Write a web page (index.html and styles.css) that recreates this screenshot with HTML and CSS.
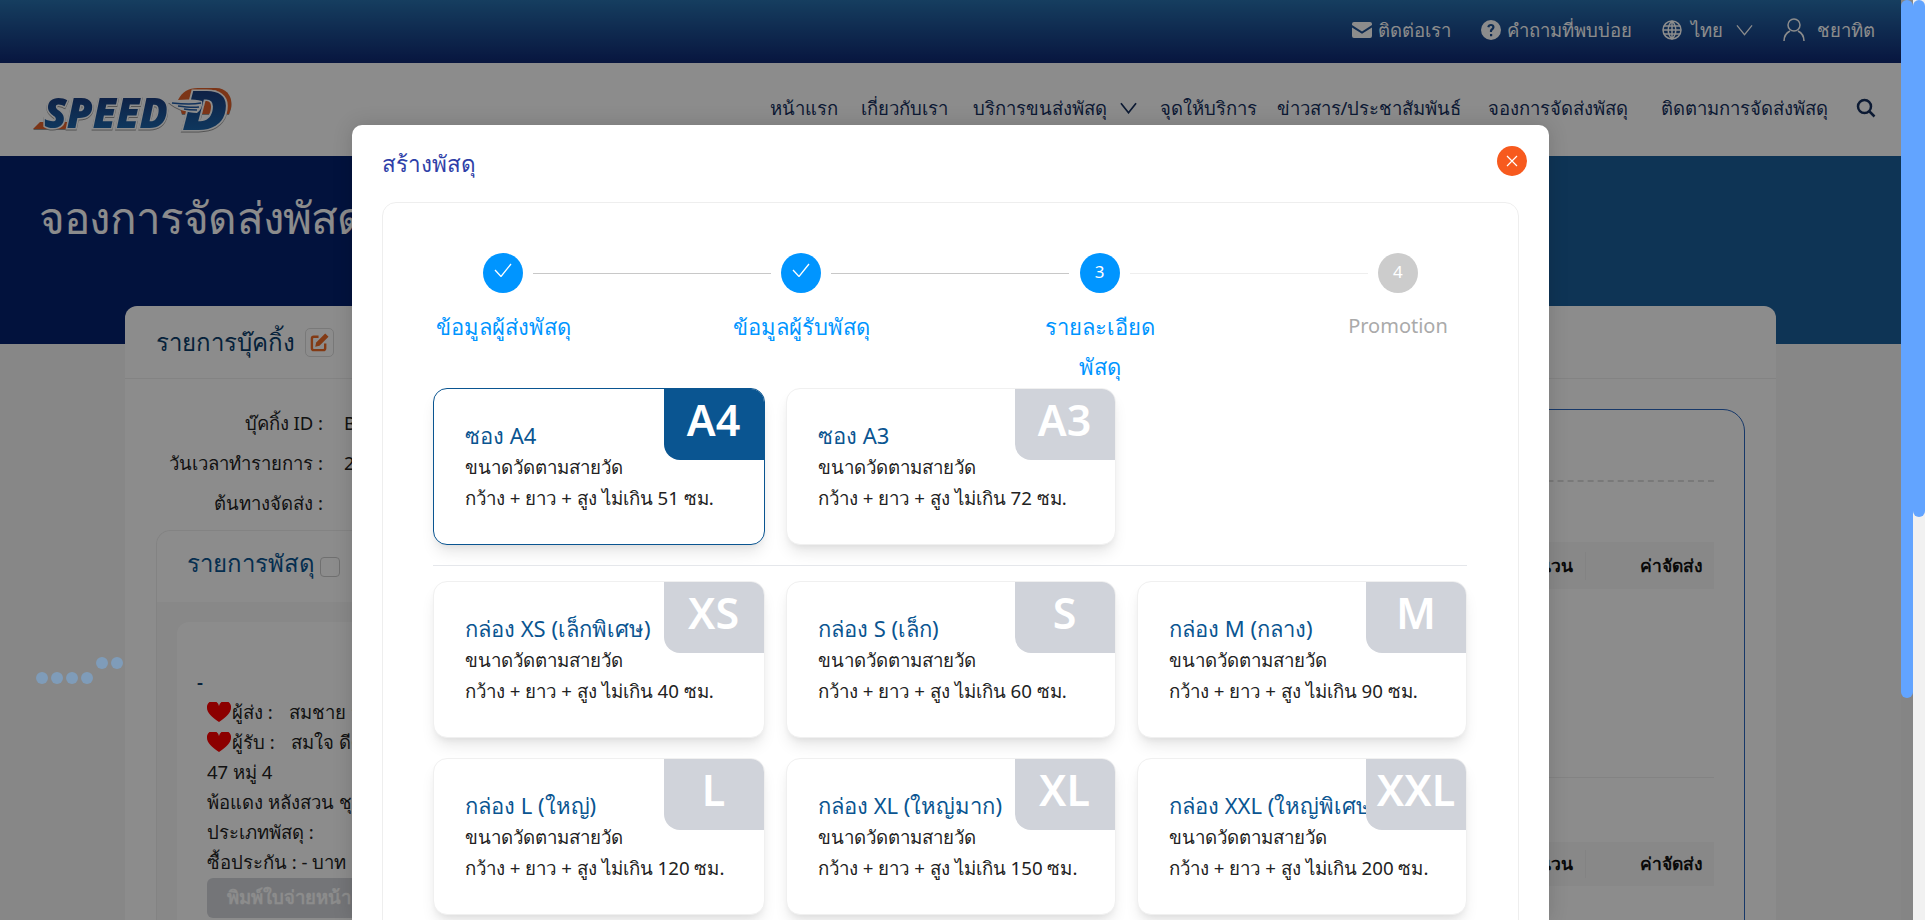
FILE: index.html
```html
<!DOCTYPE html>
<html lang="th">
<head>
  <meta charset="UTF-8">
  <title>สร้างพัสดุ</title>
  <link rel="stylesheet" href="styles.css">
</head>
<body>
  <div class="page">
    <header class="topbar">
      <a class="top-link"><svg class="ic-mail" viewBox="0 0 20 16"><path d="M2 0h16a2 2 0 0 1 2 2v1l-10 6.500L0 3V2a2 2 0 0 1 2-2zM0 5.400l10 6.400 10-6.400V14a2 2 0 0 1-2 2H2a2 2 0 0 1-2-2z"/></svg>ติดต่อเรา</a>
      <a class="top-link"><svg class="ic-help" viewBox="0 0 20 20"><path fill-rule="evenodd" d="M10 0a10 10 0 1 1 0 20 10 10 0 0 1 0-20zM9 14v2.200h2.200V14zM10 4C7.900 4 6.500 5.200 6.300 7.100l2.100.3c.1-1 .7-1.500 1.500-1.500s1.400.5 1.400 1.200c0 .6-.3 1-1 1.500-1 .8-1.400 1.400-1.400 2.600v.8h2.100v-.5c0-.7.200-1 1-1.600 1-.8 1.500-1.600 1.500-2.800C13.500 5.300 12 4 10 4z"/></svg>คำถามที่พบบ่อย</a>
      <a class="top-link"><svg class="ic-globe" viewBox="0 0 20 20"><circle cx="10" cy="10" r="9"/><path d="M1 10h18M2 6h16M2 14h16M10 1v18M10 1c-5 5-5 13 0 18M10 1c5 5 5 13 0 18"/></svg>ไทย<svg class="ic-chev" viewBox="0 0 18 12"><path d="M1 1l8 10 8-10"/></svg></a>
      <a class="top-link user"><svg class="ic-user" viewBox="0 0 22 24"><circle cx="11" cy="7" r="6"/><path d="M1 23c0-6 4-9 6-10M21 23c0-6-4-9-6-10"/></svg>ชยาทิต</a>
    </header>

    <nav class="mainnav">
      <svg class="logo" viewBox="0 0 200 44">
        <defs>
          <linearGradient id="logoBlue" x1="0" y1="0" x2="0" y2="1">
            <stop offset="0" stop-color="#1b2a6b"/>
            <stop offset="1" stop-color="#1c75bc"/>
          </linearGradient>
        </defs>
        <path class="logo-red" d="M146 12C150 4 156 0 166 0h18c11 0 17 9 15 20l-2 6h-47z"/>
        <text class="logo-small" x="162" y="9">สปีด-ดี</text>
        <path class="logo-red" d="M1 41l7-7h32l-5 7z"/>
        <text class="logo-word" x="12" y="40" textLength="124" lengthAdjust="spacingAndGlyphs">SPEED</text>
        <text class="logo-d" x="150" y="42" textLength="46" lengthAdjust="spacingAndGlyphs">D</text>
        <path class="logo-wing" d="M136 14c12-3 24-3 34-1 1 4-1 9-5 12-10 0-21-4-29-11z"/>
        <path class="logo-wing-line" d="M140 15c9 1 19 2 29 0M146 18c7 1 14 2 21 1M152 21c5 1 9 1 13 1"/>
      </svg>
      <ul class="menu">
        <li>หน้าแรก</li>
        <li>เกี่ยวกับเรา</li>
        <li>บริการขนส่งพัสดุ<svg class="ic-chev dark" viewBox="0 0 18 12"><path d="M1 1l8 10 8-10"/></svg></li>
        <li>จุดให้บริการ</li>
        <li>ข่าวสาร/ประชาสัมพันธ์</li>
        <li>จองการจัดส่งพัสดุ</li>
        <li>ติดตามการจัดส่งพัสดุ</li>
        <li><svg class="ic-search" viewBox="0 0 20 20"><circle cx="8.500" cy="8.500" r="6.500"/><path d="M13.500 13.500l5 5"/></svg></li>
      </ul>
    </nav>

    <section class="hero"><h1>จองการจัดส่งพัสดุ</h1></section>

    <main class="booking">
      <div class="booking-head">รายการบุ๊คกิ้ง
        <span class="edit-btn"><svg viewBox="0 0 20 20"><path class="edit-box" d="M9 4H4a2 2 0 0 0-2 2v10a2 2 0 0 0 2 2h10a2 2 0 0 0 2-2v-5"/><path class="edit-pen" d="M16 0.500l3.500 3.500L10 13.500l-4.500 1 1-4.500z"/></svg></span>
      </div>
      <div class="booking-body">
        <div class="booking-left">
          <dl class="meta">
            <dt>บุ๊คกิ้ง ID :</dt><dd>BK2024</dd>
            <dt>วันเวลาทำรายการ :</dt><dd>2024</dd>
            <dt>ต้นทางจัดส่ง :</dt><dd></dd>
          </dl>
          <div class="parcels">
            <div class="parcels-head">รายการพัสดุ<span class="check"></span></div>
            <div class="parcels-body">
              <div class="parcel">
                <p class="dash">-</p>
                <p class="who"><svg class="heart" viewBox="0 0 24 20"><path d="M12 20C5 15 0 11 0 6a6 6 0 0 1 12-2 6 6 0 0 1 12 2c0 5-5 9-12 14z"/></svg>ผู้ส่ง :<span class="who-name">สมชาย สมชาย</span></p>
                <p class="who"><svg class="heart" viewBox="0 0 24 20"><path d="M12 20C5 15 0 11 0 6a6 6 0 0 1 12-2 6 6 0 0 1 12 2c0 5-5 9-12 14z"/></svg>ผู้รับ :<span class="who-name">สมใจ ดีดี</span></p>
                <p>47 หมู่ 4</p>
                <p>พ้อแดง หลังสวน ชุมพร</p>
                <p>ประเภทพัสดุ :</p>
                <p>ซื้อประกัน : - บาท</p>
                <span class="print-btn">พิมพ์ใบจ่ายหน้า</span>
              </div>
            </div>
          </div>
        </div>
        <div class="summary">
          <div class="summary-top"></div>
          <div class="fee-head"><span class="qty">จำนวน</span><span>ค่าจัดส่ง</span></div>
          <div class="fee-row"></div>
          <div class="fee-head"><span class="qty">จำนวน</span><span>ค่าจัดส่ง</span></div>
        </div>
      </div>
    </main>
    <div class="page-dim"></div>
    <div class="loader"><i></i><i></i><i></i><i></i><i class="up"></i><i class="up"></i></div>
  </div>

  <div class="modal-wrap">
    <section class="modal">
      <div class="modal-head">
        <h3>สร้างพัสดุ</h3>
        <button class="close"><svg viewBox="0 0 12 12"><path d="M1 1l10 10M11 1L1 11"/></svg></button>
      </div>
      <div class="modal-card">
        <ol class="steps">
          <li class="step done"><span class="dot"><svg viewBox="0 0 18 14"><path d="M1 7l6 6.500L17 1"/></svg></span>ข้อมูลผู้ส่งพัสดุ</li>
          <li class="step done"><span class="dot"><svg viewBox="0 0 18 14"><path d="M1 7l6 6.500L17 1"/></svg></span>ข้อมูลผู้รับพัสดุ</li>
          <li class="step now"><span class="dot">3</span>รายละเอียดพัสดุ</li>
          <li class="step later"><span class="dot">4</span>Promotion</li>
        </ol>
        <div class="sizes">
          <div class="size picked"><b class="tag">A4</b><h4>ซอง A4</h4><p>ขนาดวัดตามสายวัด</p><p>กว้าง + ยาว + สูง ไม่เกิน 51 ซม.</p></div>
          <div class="size"><b class="tag">A3</b><h4>ซอง A3</h4><p>ขนาดวัดตามสายวัด</p><p>กว้าง + ยาว + สูง ไม่เกิน 72 ซม.</p></div>
        </div>
        <hr class="split">
        <div class="sizes">
          <div class="size"><b class="tag">XS</b><h4>กล่อง XS (เล็กพิเศษ)</h4><p>ขนาดวัดตามสายวัด</p><p>กว้าง + ยาว + สูง ไม่เกิน 40 ซม.</p></div>
          <div class="size"><b class="tag">S</b><h4>กล่อง S (เล็ก)</h4><p>ขนาดวัดตามสายวัด</p><p>กว้าง + ยาว + สูง ไม่เกิน 60 ซม.</p></div>
          <div class="size"><b class="tag">M</b><h4>กล่อง M (กลาง)</h4><p>ขนาดวัดตามสายวัด</p><p>กว้าง + ยาว + สูง ไม่เกิน 90 ซม.</p></div>
          <div class="size"><b class="tag">L</b><h4>กล่อง L (ใหญ่)</h4><p>ขนาดวัดตามสายวัด</p><p>กว้าง + ยาว + สูง ไม่เกิน 120 ซม.</p></div>
          <div class="size"><b class="tag">XL</b><h4>กล่อง XL (ใหญ่มาก)</h4><p>ขนาดวัดตามสายวัด</p><p>กว้าง + ยาว + สูง ไม่เกิน 150 ซม.</p></div>
          <div class="size"><b class="tag">XXL</b><h4>กล่อง XXL (ใหญ่พิเศษ)</h4><p>ขนาดวัดตามสายวัด</p><p>กว้าง + ยาว + สูง ไม่เกิน 200 ซม.</p></div>
        </div>
      </div>
    </section>
  </div>

  <div class="bars"><span class="bar page-bar"><i></i></span><span class="bar modal-bar"><i></i></span></div>
</body>
</html>
```

FILE: styles.css
```css
* {
  box-sizing: border-box;
}

html, body {
  height: 100%;
  margin: 0;
  overflow: hidden;
}

body {
  font-family: "Noto Sans", "Open Sans", "DejaVu Sans", sans-serif;
  font-size: 18.500px;
  color: #222;
  background: #f6f6f6;
}

p, h1, h3, h4, ul, ol, dl, dd {
  margin: 0;
  padding: 0;
  list-style: none;
}

.page {
  position: relative;
  height: 920px;
  width: 1901px;
  overflow: hidden;
}

/* page behind the modal */
.topbar {
  height: 63px;
  display: flex;
  justify-content: flex-end;
  align-items: center;
  gap: 30px;
  padding: 0 26px 3px 0;
  background: linear-gradient(#2871ae, #0f2873);
  color: #fff;
}

.top-link {
  display: flex;
  align-items: center;
  gap: 6px;
}

.ic-mail, .ic-help {
  width: 20px;
  height: 20px;
  fill: #fff;
}

.ic-globe {
  width: 20px;
  height: 20px;
  fill: none;
  stroke: #fff;
  stroke-width: 1.500;
  margin-right: 3px;
}

.ic-chev {
  width: 17px;
  height: 12px;
  fill: none;
  stroke: #fff;
  stroke-width: 1.300;
  margin-left: 7px;
}

.ic-chev.dark {
  flex: none;
  stroke: #16305e;
  stroke-width: 1.800;
  margin-left: 13px;
}

.ic-user {
  width: 22px;
  height: 24px;
  fill: none;
  stroke: #fff;
  stroke-width: 1.500;
  margin-right: 6px;
}

.mainnav {
  height: 93px;
  display: flex;
  justify-content: space-between;
  background: #fff;
  padding: 25px 25px 0 32px;
}

.logo {
  width: 200px;
  height: 44px;
  overflow: visible;
  filter: drop-shadow(0 1px 0 #999);
}

.logo-red {
  fill: #e2622a;
}

.logo-small {
  font-size: 8px;
  fill: #fff;
}

.logo-word, .logo-d {
  font-family: "Open Sans", sans-serif;
  font-weight: 800;
  font-style: italic;
  fill: url(#logoBlue);
  stroke: #fff;
  stroke-width: 3;
  paint-order: stroke;
}

.logo-word {
  font-size: 42px;
}

.logo-d {
  font-size: 54px;
}

.logo-wing {
  fill: #fff;
}

.logo-wing-line {
  fill: none;
  stroke: #1e5ba8;
  stroke-width: 1.500;
}

/* columns follow the width each label has in the design */
.menu {
  display: grid;
  grid-template-columns: 64px 86px 165px 93px 178px 149px 174px 20px;
  gap: 25px;
  height: 40px;
  align-items: center;
  color: #16305e;
}

.menu li {
  display: flex;
  align-items: center;
  justify-content: center;
  white-space: nowrap;
}

.ic-search {
  width: 20px;
  height: 20px;
  flex: none;
  fill: none;
  stroke: #16305e;
  stroke-width: 2.500;
}

.hero {
  height: 188px;
  background: linear-gradient(90deg, #05216f 20%, #1a5f9c 80%);
  padding: 27px 39px;
  color: #fff;
}

.hero h1 {
  font-size: 44px;
  font-weight: 400;
  letter-spacing: -.8px;
}

.booking {
  margin: -38px 125px 0;
  width: 1651px;
  height: 700px;
  background: #fff;
  border-radius: 12px 12px 0 0;
}

.booking-head {
  height: 73px;
  display: flex;
  align-items: center;
  gap: 10px;
  padding-left: 31px;
  border-bottom: 1px solid #eee;
  font-size: 24px;
  color: #0a3d6b;
}

.edit-btn {
  width: 29px;
  height: 29px;
  border: 1px solid #ddd;
  border-radius: 5px;
  padding: 4px;
}

.edit-btn svg {
  display: block;
}

.edit-box {
  fill: none;
  stroke: #ee6a25;
  stroke-width: 2.500;
}

.edit-pen {
  fill: #ee6a25;
}

.booking-body {
  display: flex;
  justify-content: space-between;
  padding: 24px 31px 0;
}

.booking-left {
  width: 900px;
}

.meta {
  display: grid;
  grid-template-columns: 167px 1fr;
  column-gap: 21px;
  line-height: 40px;
}

.meta dt {
  text-align: right;
}

.parcels {
  margin-top: 7px;
  border: 1px solid #eee;
  border-radius: 14px;
  background: #f8f8f8;
  height: 500px;
}

.parcels-head {
  height: 71px;
  display: flex;
  align-items: center;
  gap: 5px;
  padding: 0 0 6px 30px;
  background: #fff;
  border-radius: 14px 14px 0 0;
  color: #0a5591;
  font-size: 24px;
}

.check {
  width: 20px;
  height: 20px;
  margin-top: 6px;
  border: 1px solid #ccc;
  border-radius: 4px;
  background: #fff;
}

.parcels-body {
  padding: 20px;
}

.parcel {
  background: #fff;
  border-radius: 12px;
  padding: 45px 30px 0;
  height: 400px;
  line-height: 30px;
}

.dash {
  margin-left: -10px;
  color: #0a3d6b;
  font-weight: 600;
}

.who {
  display: flex;
  align-items: center;
  white-space: nowrap;
}

.who-name {
  margin-left: 16px;
}

.heart {
  width: 24px;
  height: 20px;
  margin-right: 1px;
  fill: #ff0000;
}

.print-btn {
  display: inline-block;
  margin-top: 1px;
  padding: 0 20px;
  width: 200px;
  height: 40px;
  line-height: 38px;
  border-radius: 6px;
  background: #d4d6db;
  color: #fff;
  font-weight: 600;
  white-space: nowrap;
}

.summary {
  width: 670px;
  height: 600px;
  margin-top: 6px;
  border: 1px solid #2a66c0;
  border-radius: 22px 22px 0 0;
  padding-right: 30px;
}

.summary-top {
  height: 72px;
  border-bottom: 2px dashed #ddd;
}

.fee-head {
  display: flex;
  justify-content: flex-end;
  align-items: center;
  height: 47px;
  margin-top: 60px;
  padding-right: 11px;
  background: #f8f8f8;
  font-weight: 600;
  font-size: 17.500px;
  color: #111;
}

.qty {
  margin-right: 54px;
  padding-right: 12px;
  border-right: 1px solid #eee;
}

.fee-row {
  height: 189px;
  border-bottom: 1px solid #eee;
}

.fee-row + .fee-head {
  height: 44px;
  margin-top: 64px;
}

.page-dim {
  position: absolute;
  inset: 0;
  background: rgba(0, 0, 0, .45);
}

.loader {
  position: absolute;
  left: 36px;
  top: 657px;
  display: flex;
  gap: 3px;
  align-items: flex-end;
  height: 27px;
}

.loader i {
  width: 12px;
  height: 12px;
  border-radius: 50%;
  background: #7f9cb9;
}

.loader i.up {
  margin-bottom: 15px;
}

/* modal */
.modal-wrap {
  position: absolute;
  left: 352px;
  top: 125px;
  width: 1197px;
  height: 795px;
}

.modal {
  background: #fff;
  border-radius: 10px 10px 0 0;
  height: 795px;
  overflow: hidden;
  padding: 0 30px;
  box-shadow: 0 0 20px rgba(0, 0, 0, .15);
}

.modal-head {
  height: 77px;
  display: flex;
  justify-content: space-between;
  align-items: center;
}

.modal-head h3 {
  font-size: 22.500px;
  font-weight: 400;
  color: #2f3fa8;
}

.close {
  width: 30px;
  height: 30px;
  padding: 9px;
  margin: -6px -8px 0 0;
  border: 0;
  border-radius: 50%;
  background: #f75a1e;
}

.close svg {
  display: block;
  fill: none;
  stroke: #fff;
  stroke-width: 1.200;
}

.modal-card {
  border: 1px solid #eee;
  border-radius: 14px;
  height: 820px;
  padding: 50px 50px 0;
}

.steps {
  display: flex;
  justify-content: space-between;
  height: 135px;
}

.step {
  position: relative;
  width: 140px;
  text-align: center;
  font-size: 22px;
  line-height: 40px;
  color: #aaa;
}

.step.later {
  font-size: 20px;
}

.step.done, .step.now {
  color: #0095ff;
}

.dot {
  display: flex;
  align-items: center;
  justify-content: center;
  width: 40px;
  height: 40px;
  margin: 0 auto 13px;
  padding-bottom: 3px;
  border-radius: 50%;
  background: #ccc;
  color: #fff;
  font-size: 17px;
}

.done .dot, .now .dot {
  background: #0095ff;
}

.dot svg {
  width: 18px;
  height: 14px;
  fill: none;
  stroke: #fff;
  stroke-width: 1.300;
  margin-bottom: 3px;
}

.step::after {
  content: "";
  position: absolute;
  left: calc(50% + 30px);
  top: 20px;
  width: 238px;
  height: 1px;
  background: #c8c8c8;
}

.step.now::after {
  background: #eee;
}

.step:last-child::after {
  display: none;
}

.sizes {
  display: grid;
  grid-template-columns: 331.500px 329.500px 330px;
  gap: 20px 21.500px;
}

.size {
  position: relative;
  height: 157px;
  padding: 30px 31px 0;
  background: #fff;
  border: 1px solid #f0f0f0;
  border-radius: 14px;
  overflow: hidden;
  box-shadow: 0 10px 15px -3px rgba(0, 0, 0, .1), 0 4px 6px -2px rgba(0, 0, 0, .05);
  line-height: 30.500px;
  font-size: 18.700px;
  color: #222;
}

.size.picked {
  border-color: #0a5591;
}

.size h4 {
  font-size: 22px;
  font-weight: 400;
  color: #0a5591;
  line-height: 33px;
  white-space: nowrap;
}

.tag {
  position: absolute;
  right: 0;
  top: 0;
  z-index: 1;
  width: 100px;
  height: 71px;
  background: #d0d3da;
  border-bottom-left-radius: 16px;
  color: #fff;
  font-size: 43px;
  font-weight: 600;
  line-height: 62px;
  text-align: center;
}

.picked .tag {
  background: #0a5591;
}

.split {
  margin: 20px 1px 15px 0;
  border: 0;
  border-top: 1px solid #e5e7eb;
}

/* two scrollbars side by side: page one is dimmed, modal one is on top */
.bars {
  position: absolute;
  right: 0;
  top: 0;
  width: 24px;
  height: 920px;
  display: flex;
}

.bar {
  flex: 1;
  position: relative;
}

.page-bar {
  background: #858585;
}

.modal-bar {
  background: #f1f1f1;
}

.bar i {
  display: block;
  background: #62a4ff;
  border-radius: 6px;
}

.page-bar i {
  height: 698px;
}

.modal-bar i {
  height: 517px;
}
```
